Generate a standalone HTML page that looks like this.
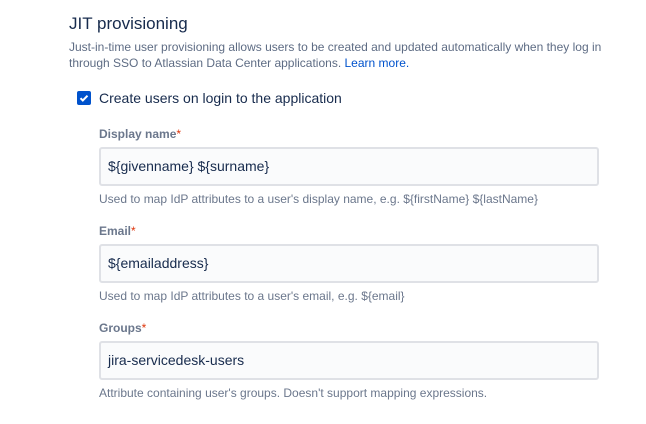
<!DOCTYPE html>
<html><head><style>
body{margin:0;width:646px;height:424px;background:#fff;font-family:"Liberation Sans",sans-serif;color:#172b4d;position:relative;overflow:hidden}
.a{position:absolute;white-space:nowrap}
.t{left:69px;top:14px;font-size:17px;}
.d{left:69px;font-size:12px;color:#5e6c84}
.lbl{left:99px;font-size:12px;font-weight:bold;color:#6b778c}
.lbl span{color:#de350b;font-weight:normal}
.in{left:99px;width:496px;height:35px;border:2px solid #dfe1e6;background:#fafbfc;border-radius:3px;font-size:14px;line-height:35px;padding-left:7px;box-sizing:content-box;width:489px}
.h{left:99px;font-size:12px;color:#6b778c}
</style></head><body>
<div class="a t">JIT provisioning</div>
<div class="a d" style="top:40px">Just-in-time user provisioning allows users to be created and updated automatically when they log in</div>
<div class="a d" style="top:56px">through SSO to Atlassian Data Center applications. <span style="color:#0052cc">Learn more.</span></div>
<div class="a" style="left:77px;top:91px;width:14px;height:14px;background:#0052cc;border-radius:2px">
<svg width="14" height="14" viewBox="0 0 14 14"><path d="M3.5 7.2l2.3 2.3 4.7-4.8" stroke="#fff" stroke-width="2" fill="none"/></svg></div>
<div class="a" style="left:99px;top:90px;font-size:14px">Create users on login to the application</div>
<div class="a lbl" style="top:127px">Display name<span>*</span></div>
<div class="a in" style="top:147px">${givenname} ${surname}</div>
<div class="a h" style="top:192px">Used to map IdP attributes to a user's display name, e.g. ${firstName} ${lastName}</div>
<div class="a lbl" style="top:224px">Email<span>*</span></div>
<div class="a in" style="top:244px">${emailaddress}</div>
<div class="a h" style="top:289px">Used to map IdP attributes to a user's email, e.g. ${email}</div>
<div class="a lbl" style="top:321px">Groups<span>*</span></div>
<div class="a in" style="top:341px">jira-servicedesk-users</div>
<div class="a h" style="top:386px">Attribute containing user's groups. Doesn't support mapping expressions.</div>
</body></html>
